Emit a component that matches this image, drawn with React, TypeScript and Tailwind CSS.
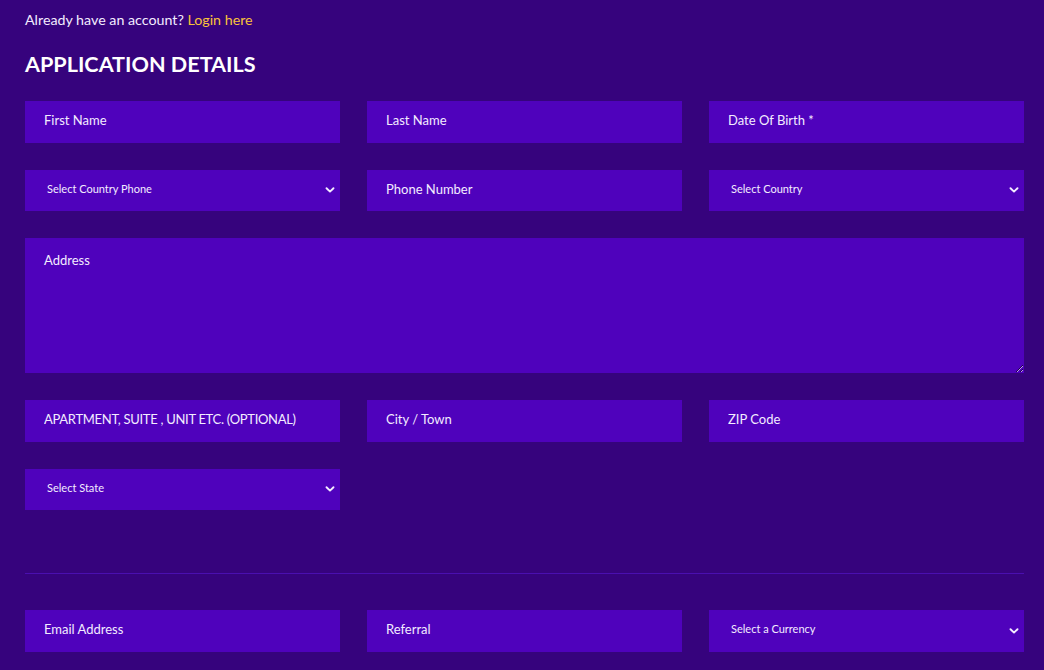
import React from "react";

const Chevron = () => (
  <svg width="10" height="10" viewBox="0 0 10 10" className="pointer-events-none absolute right-[5px] top-1/2 -translate-y-1/2">
    <path d="M1.5 3.2 L5 6.6 L8.5 3.2" fill="none" stroke="#f3ecff" strokeWidth="1.9" strokeLinecap="round" strokeLinejoin="round" />
  </svg>
);

const Input = ({ ph, tight }: { ph: string; tight?: boolean }) => (
  <input
    placeholder={ph}
    className={
      tight
        ? "h-[41.5px] w-full bg-[#4f02bc] px-[19px] pb-[3px] text-[13px] tracking-[-0.3px] text-[#f3ecff] outline-none placeholder:text-[#f3ecff]"
        : "h-[41.5px] w-full bg-[#4f02bc] px-[19px] pb-[3px] text-[13px] text-[#f3ecff] outline-none placeholder:text-[#f3ecff]"
    }
  />
);

const Select = ({ label }: { label: string }) => (
  <div className="relative h-[41.5px] w-full">
    <select className="h-full w-full appearance-none bg-[#4f02bc] pb-[3px] pl-[22px] text-[11px] text-[#f3ecff] outline-none">
      <option>{label}</option>
    </select>
    <Chevron />
  </div>
);

export default function App() {
  return (
    <div
      className="min-h-[670px] w-full bg-[#36037d] pl-[25px] pr-[20px] pt-[10px]"
      style={{ fontFamily: "Lato, 'Open Sans', sans-serif" }}
    >
      <p className="text-[14.25px] leading-[20px] text-[#f3ecff]">
        Already have an account? <span className="text-[#f8c23a]">Login here</span>
      </p>
      <h1 className="mt-[19px] text-[21.6px] font-bold leading-[30px] text-white">APPLICATION DETAILS</h1>
      <div className="mt-[22px] grid grid-cols-3 gap-x-[27px] gap-y-[27px]">
        <Input ph="First Name" />
        <Input ph="Last Name" />
        <Input ph="Date Of Birth *" />
        <Select label="Select Country Phone" />
        <Input ph="Phone Number" />
        <Select label="Select Country" />
        <textarea
          placeholder="Address"
          className="col-span-3 h-[135px] w-full bg-[#4f02bc] px-[19px] pt-[13px] text-[13px] text-[#f3ecff] outline-none placeholder:text-[#f3ecff]"
        />
        <Input ph="APARTMENT, SUITE , UNIT ETC. (OPTIONAL)" tight />
        <Input ph="City / Town" />
        <Input ph="ZIP Code" />
        <Select label="Select State" />
      </div>
      <div className="mt-[63px] h-px w-full bg-[#4a0fb0]" />
      <div className="mt-[36px] grid grid-cols-3 gap-x-[27px]">
        <Input ph="Email Address" />
        <Input ph="Referral" />
        <Select label="Select a Currency" />
      </div>
    </div>
  );
}
